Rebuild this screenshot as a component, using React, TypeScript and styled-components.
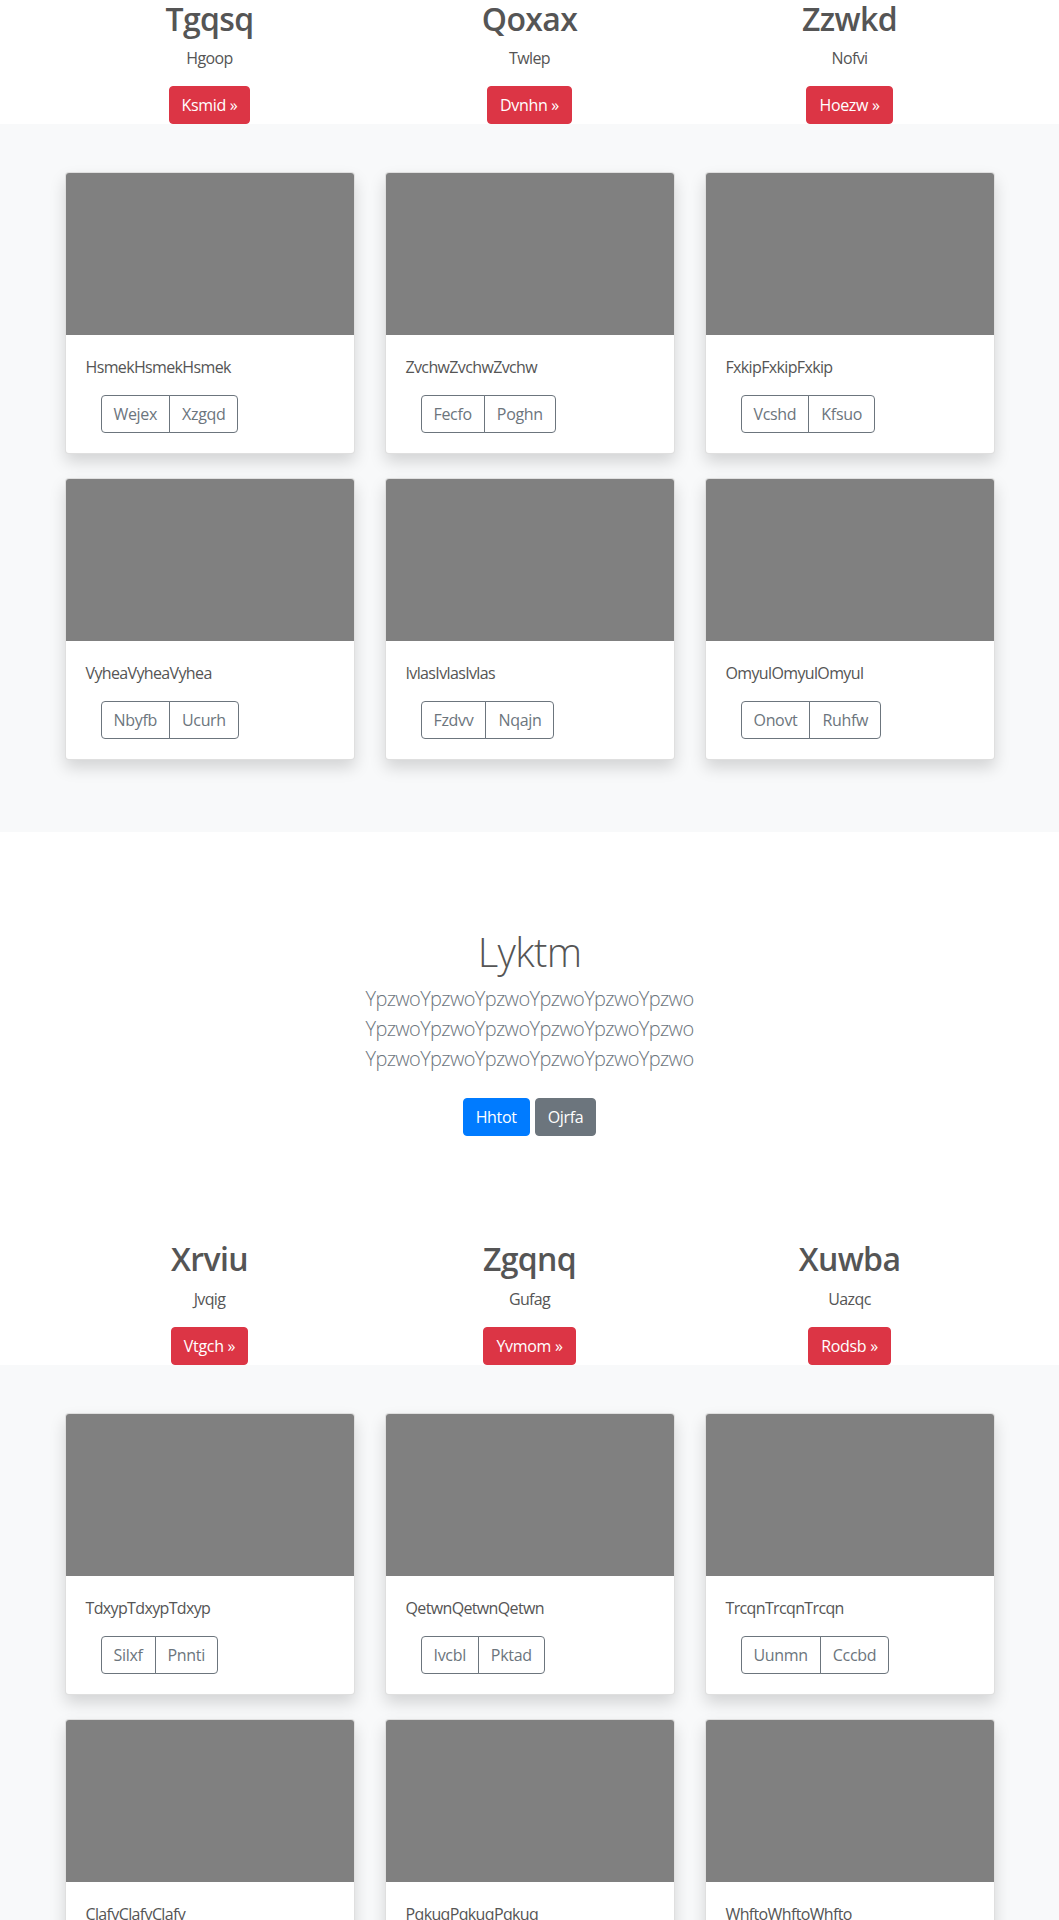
import React from "react";
import styled, { createGlobalStyle } from "styled-components";

const GlobalStyle = createGlobalStyle`
  *, *::before, *::after { box-sizing: border-box; }
  html, body {
    margin: 0;
    padding: 0;
    background: #ffffff;
  }
  body {
    font-family: "Open Sans", "Noto Sans", "Liberation Sans", sans-serif;
    font-size: 16px;
    line-height: 1.5;
    letter-spacing: -0.04em;
    color: #555555;
  }
`;

const Container = styled.div<{ $narrow?: boolean }>`
  width: 100%;
  max-width: ${(p) => (p.$narrow ? "640px" : "960px")};
  margin: 0 auto;
  padding: 0 15px;
`;

const ThreeCols = styled.div<{ $rowGap?: number }>`
  display: grid;
  grid-template-columns: repeat(3, 1fr);
  column-gap: 30px;
  row-gap: ${(p) => p.$rowGap ?? 0}px;
`;

/* ---------- Marketing features ---------- */
const FeatureSection = styled.section`
  background: #ffffff;
`;

const Feature = styled.div`
  text-align: center;
`;

const FeatureTitle = styled.h2`
  margin: 0 0 8px;
  font-size: 32px;
  font-weight: 600;
  line-height: 1.2;
  color: #555555;
`;

const FeatureText = styled.p`
  margin: 0 0 16px;
  color: #555555;
`;

const FeatureAction = styled.p`
  margin: 0;
  display: flex;
  justify-content: center;
`;

const Button = styled.a<{ $variant: "danger" | "primary" | "secondary" }>`
  display: inline-block;
  padding: 6px 12px;
  font-size: 16px;
  line-height: 1.5;
  letter-spacing: -0.02em;
  border-radius: 4px;
  border: 1px solid transparent;
  color: #ffffff;
  text-decoration: none;
  cursor: pointer;
  background: ${(p) =>
    p.$variant === "danger" ? "#dc3545" : p.$variant === "primary" ? "#007bff" : "#6c757d"};
  border-color: ${(p) =>
    p.$variant === "danger" ? "#dc3545" : p.$variant === "primary" ? "#007bff" : "#6c757d"};
`;

/* ---------- Album ---------- */
const AlbumSection = styled.section`
  background: #f8f9fa;
  padding: 48px 0 72px;
`;

const Card = styled.div`
  background: #ffffff;
  border: 1px solid rgba(0, 0, 0, 0.125);
  border-radius: 4px;
  overflow: hidden;
  box-shadow: 0 8px 16px rgba(0, 0, 0, 0.15);
`;

const Thumb = styled.div`
  height: 162px;
  background: #808080;
`;

const CardBody = styled.div`
  padding: 20px;
`;

const CardText = styled.p`
  margin: 0 0 16px;
  color: #555555;
`;

const BtnGroup = styled.div`
  display: inline-flex;
  margin-left: 15px;
`;

const OutlineBtn = styled.button`
  font-family: inherit;
  font-size: 16px;
  line-height: 1.5;
  letter-spacing: -0.02em;
  padding: 6px 12px;
  background: transparent;
  color: #6c757d;
  border: 1px solid #6c757d;
  cursor: pointer;
  &:first-child {
    border-radius: 4px 0 0 4px;
  }
  &:last-child {
    border-radius: 0 4px 4px 0;
    margin-left: -1px;
  }
`;

/* ---------- Jumbotron ---------- */
const Jumbotron = styled.section`
  background: #ffffff;
  padding: 96px 0;
  text-align: center;
`;

const JumboHeading = styled.h1`
  margin: 0 0 8px;
  font-size: 40px;
  font-weight: 300;
  line-height: 1.2;
  color: #555555;
`;

const Lead = styled.p`
  margin: 0 0 16px;
  font-size: 20px;
  font-weight: 300;
  line-height: 1.5;
  color: #6c757d;
`;

const JumboActions = styled.p`
  margin: 0;
  padding: 8px 0;
  display: flex;
  justify-content: center;
  gap: 5px;
`;

type FeatureData = { title: string; text: string; action: string };
type CardData = { text: string; buttons: [string, string] };

const features1: FeatureData[] = [
  { title: "Tgqsq", text: "Hgoop", action: "Ksmid" },
  { title: "Qoxax", text: "Twlep", action: "Dvnhn" },
  { title: "Zzwkd", text: "Nofvi", action: "Hoezw" },
];

const features2: FeatureData[] = [
  { title: "Xrviu", text: "Jvqig", action: "Vtgch" },
  { title: "Zgqnq", text: "Gufag", action: "Yvmom" },
  { title: "Xuwba", text: "Uazqc", action: "Rodsb" },
];

const cards1: CardData[] = [
  { text: "HsmekHsmekHsmek", buttons: ["Wejex", "Xzgqd"] },
  { text: "ZvchwZvchwZvchw", buttons: ["Fecfo", "Poghn"] },
  { text: "FxkipFxkipFxkip", buttons: ["Vcshd", "Kfsuo"] },
  { text: "VyheaVyheaVyhea", buttons: ["Nbyfb", "Ucurh"] },
  { text: "IvlasIvlasIvlas", buttons: ["Fzdvv", "Nqajn"] },
  { text: "OmyulOmyulOmyul", buttons: ["Onovt", "Ruhfw"] },
];

const cards2: CardData[] = [
  { text: "TdxypTdxypTdxyp", buttons: ["Silxf", "Pnnti"] },
  { text: "QetwnQetwnQetwn", buttons: ["Ivcbl", "Pktad"] },
  { text: "TrcqnTrcqnTrcqn", buttons: ["Uunmn", "Cccbd"] },
  { text: "ClafyClafyClafy", buttons: ["Kbvme", "Tosja"] },
  { text: "PqkuqPqkuqPqkuq", buttons: ["Lhwud", "Ezmro"] },
  { text: "WhftoWhftoWhfto", buttons: ["Gadnx", "Ruvpe"] },
];

const Features: React.FC<{ items: FeatureData[] }> = ({ items }) => (
  <FeatureSection>
    <Container>
      <ThreeCols>
        {items.map((f) => (
          <Feature key={f.title}>
            <FeatureTitle>{f.title}</FeatureTitle>
            <FeatureText>{f.text}</FeatureText>
            <FeatureAction>
              <Button $variant="danger" href="#">
                {f.action} »
              </Button>
            </FeatureAction>
          </Feature>
        ))}
      </ThreeCols>
    </Container>
  </FeatureSection>
);

const Album: React.FC<{ items: CardData[] }> = ({ items }) => (
  <AlbumSection>
    <Container>
      <ThreeCols $rowGap={24}>
        {items.map((c) => (
          <Card key={c.text}>
            <Thumb />
            <CardBody>
              <CardText>{c.text}</CardText>
              <BtnGroup>
                <OutlineBtn type="button">{c.buttons[0]}</OutlineBtn>
                <OutlineBtn type="button">{c.buttons[1]}</OutlineBtn>
              </BtnGroup>
            </CardBody>
          </Card>
        ))}
      </ThreeCols>
    </Container>
  </AlbumSection>
);

export default function App() {
  const word = "YpzwoYpzwoYpzwoYpzwoYpzwoYpzwo";
  return (
    <>
      <GlobalStyle />
      <Features items={features1} />
      <Album items={cards1} />
      <Jumbotron>
        <Container $narrow>
          <JumboHeading>Lyktm</JumboHeading>
          <Lead>
            {word} {word} {word}
          </Lead>
          <JumboActions>
            <Button $variant="primary" href="#">
              Hhtot
            </Button>
            <Button $variant="secondary" href="#">
              Ojrfa
            </Button>
          </JumboActions>
        </Container>
      </Jumbotron>
      <Features items={features2} />
      <Album items={cards2} />
    </>
  );
}
